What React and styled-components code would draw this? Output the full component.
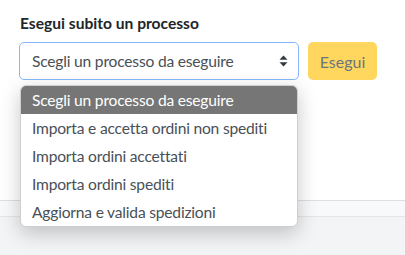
import React from "react";
import styled, { createGlobalStyle } from "styled-components";

const Global = createGlobalStyle`
  html, body { margin: 0; padding: 0; background: #f3f4f6; }
  body { font-family: Lato, "Liberation Sans", sans-serif; width: 405px; height: 255px; overflow: hidden; }
`;

const Page = styled.div`
  display: flex;
  flex-direction: column;
  height: 255px;
`;

const Card = styled.section`
  background: #fff;
  height: 201px;
  box-sizing: border-box;
  padding: 14px 19px 0;
  border-bottom: 1px solid #dcdfe3;
`;

const Strip = styled.div`
  height: 15px;
  background: #f8f9fa;
  border-bottom: 1px solid #e3e5e8;
`;

const Title = styled.h3`
  margin: 0 0 10px 1px;
  font-size: 15.6px;
  font-weight: 700;
  color: #212529;
  line-height: 18px;
`;

const Row = styled.div`
  display: flex;
  align-items: flex-start;
  gap: 9px;
`;

const SelectWrap = styled.div`
  position: relative;
  width: 280px;
`;

const SelectBox = styled.div`
  box-sizing: border-box;
  height: 38px;
  border: 1px solid #86b7fe;
  border-radius: 5px;
  display: flex;
  align-items: center;
  justify-content: space-between;
  padding: 0 10px 0 12px;
  font-size: 15.6px;
  letter-spacing: -0.2px;
  color: #495057;
`;

const Button = styled.button`
  height: 38px;
  width: 69px;
  border: none;
  border-radius: 5px;
  background: #ffd75e;
  color: #6c757d;
  font-family: inherit;
  font-size: 16px;
  padding: 0;
`;

const Menu = styled.ul`
  position: absolute;
  left: 1px;
  top: 43px;
  width: 278px;
  margin: 0;
  padding: 0;
  list-style: none;
  background: #fff;
  border: 1px solid #cfcfcf;
  border-radius: 6px;
  overflow: hidden;
  box-sizing: border-box;
  box-shadow: 0 6px 20px rgba(0, 0, 0, 0.22);
`;

const Item = styled.li`
  height: 28px;
  line-height: 28px;
  padding: 0 11px;
  font-size: 15.6px;
  letter-spacing: -0.2px;
  color: ${(p) => (p.$active ? "#fff" : "#495057")};
  background: ${(p) => (p.$active ? "#767676" : "transparent")};
`;

const Arrows = () => (
  <svg width="9" height="12" viewBox="0 0 9 12">
    <path d="M4.5 0.5 L8.5 4.8 H0.5 Z" fill="#343a40" />
    <path d="M4.5 11.5 L8.5 7.2 H0.5 Z" fill="#343a40" />
  </svg>
);

const options = [
  "Scegli un processo da eseguire",
  "Importa e accetta ordini non spediti",
  "Importa ordini accettati",
  "Importa ordini spediti",
  "Aggiorna e valida spedizioni",
];

export default function App() {
  return (
    <Page>
      <Global />
      <Card>
        <Title>Esegui subito un processo</Title>
        <Row>
          <SelectWrap>
            <SelectBox>
              <span>Scegli un processo da eseguire</span>
              <Arrows />
            </SelectBox>
            <Menu>
              {options.map((o, i) => (
                <Item key={o} $active={i === 0}>{o}</Item>
              ))}
            </Menu>
          </SelectWrap>
          <Button>Esegui</Button>
        </Row>
      </Card>
      <Strip />
    </Page>
  );
}
